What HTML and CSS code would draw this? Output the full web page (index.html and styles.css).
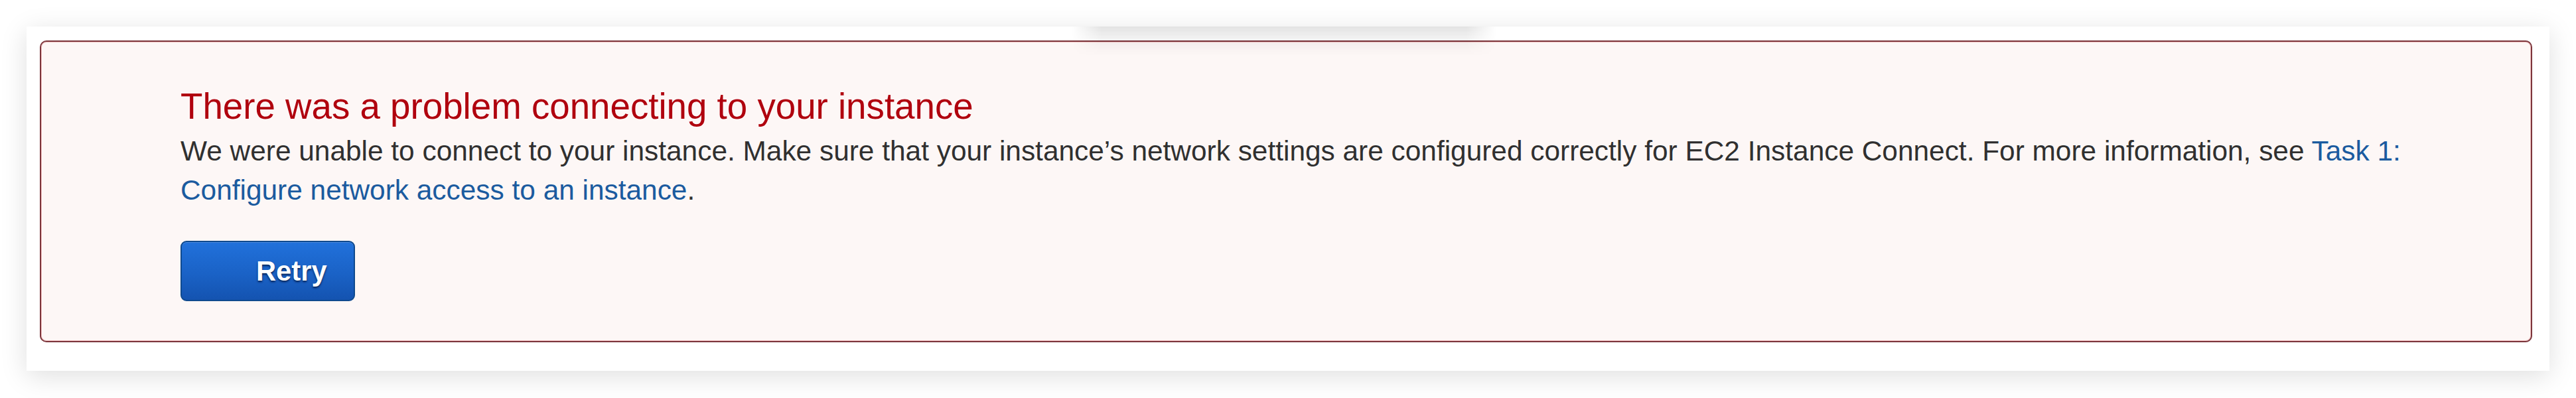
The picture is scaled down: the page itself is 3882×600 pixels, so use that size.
FILE: index.html
```html
<!DOCTYPE html>
<html lang="en">
<head>
<meta charset="utf-8">
<title>EC2 Instance Connect</title>
<link rel="stylesheet" href="styles.css">
</head>
<body>
<div class="page">
  <div class="card">
    <div class="overhang-shadow"></div>
    <div class="alert">
      <h2 class="alert-title">There was a problem connecting to your instance</h2>
      <p class="alert-text">We were unable to connect to your instance. Make sure that your instance’s network settings are configured correctly for EC2 Instance Connect. For more information, see <a class="link" href="#">Task 1: Configure network access to an instance</a>.</p>
      <button class="btn-retry" type="button">Retry</button>
    </div>
  </div>
</div>
</body>
</html>
```

FILE: styles.css
```css
html, body {
  margin: 0;
  padding: 0;
  background: #ffffff;
}

body {
  font-family: "Liberation Sans", Arial, Helvetica, sans-serif;
  width: 3882px;
  height: 600px;
  overflow: hidden;
}

.page {
  padding: 40px 40px 0 40px;
}

.card {
  position: relative;
  background: #ffffff;
  height: 519px;
  box-sizing: border-box;
  padding: 21px 26px 43px 20px;
  box-shadow: 0 8px 38px rgba(0, 0, 0, 0.13);
}

.overhang-shadow {
  position: absolute;
  left: 1575px;
  top: 0;
  width: 640px;
  height: 44px;
  background: linear-gradient(to bottom, rgba(0, 0, 0, 0.11), rgba(0, 0, 0, 0.04) 50%, rgba(0, 0, 0, 0));
  -webkit-mask-image: linear-gradient(to right, transparent, #000 45px, #000 calc(100% - 45px), transparent);
  mask-image: linear-gradient(to right, transparent, #000 45px, #000 calc(100% - 45px), transparent);
  pointer-events: none;
  z-index: 2;
}

.alert {
  height: 455px;
  box-sizing: border-box;
  border: 2px solid #7c363c;
  border-radius: 10px;
  background: #fdf7f6;
  box-shadow: inset 0 0 0 1px #f3c2c2;
  padding: 66px 90px 60px 210px;
}

.alert-title {
  margin: 0;
  font-size: 54.7px;
  line-height: 62px;
  font-weight: normal;
  color: #b0000e;
}

.alert-text {
  margin: 7px 0 0 0;
  font-size: 42.4px;
  line-height: 59px;
  color: #303030;
}

.link {
  color: #1b5b9f;
  text-decoration: none;
}

.btn-retry {
  display: block;
  margin-top: 47px;
  width: 263px;
  height: 91px;
  box-sizing: border-box;
  padding: 0 40px 0 112px;
  border: 2px solid #0f4a8e;
  border-radius: 9px;
  background: linear-gradient(to bottom, #2171db, #1a62c6 55%, #1453b0);
  box-shadow: inset 0 1px 0 rgba(255, 255, 255, 0.18);
  font-family: "Liberation Sans", Arial, Helvetica, sans-serif;
  font-size: 41.7px;
  font-weight: bold;
  color: #ffffff;
  text-shadow: 0 2px 3px rgba(0, 20, 60, 0.85);
  text-align: left;
  white-space: nowrap;
  cursor: pointer;
}
```
